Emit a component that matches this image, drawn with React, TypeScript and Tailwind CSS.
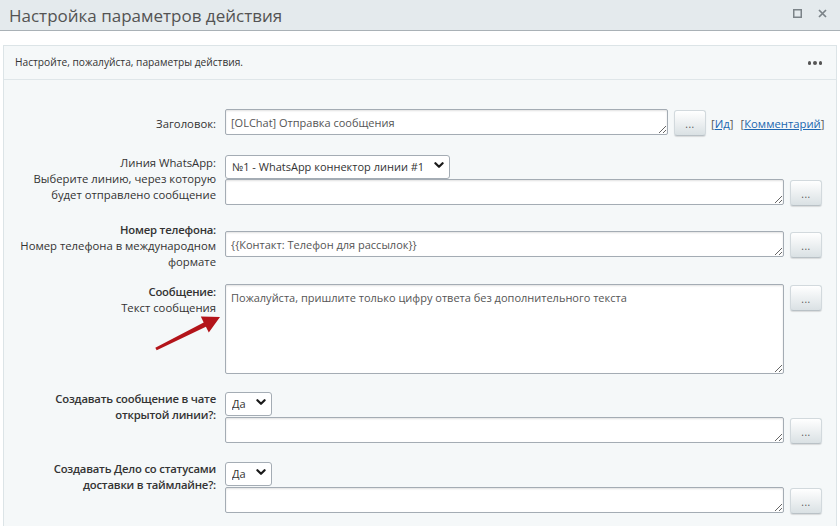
import React from "react";

const Btn = () => (
  <button
    type="button"
    className="mt-[1px] ml-[6px] flex h-[26px] w-[32px] shrink-0 items-center justify-center rounded-[3px] border border-[#d2d9dd] border-b-[#b9c1c6] bg-linear-to-b from-[#ffffff] to-[#dae1e4] pt-[2px] text-[10px] leading-none tracking-[0.5px] text-[#555] shadow-[0_1px_1px_rgba(0,0,0,0.12)]"
  >
    ...
  </button>
);

const TA = ({ w, h = 26, value = "" }: { w: string; h?: number; value?: string }) => (
  <textarea
    defaultValue={value}
    style={{ height: h }}
    className={`${w} block shrink-0 rounded-[2px] border border-[#a4acb4] bg-white px-[5px] py-[5px] text-[11px] leading-[15px] text-[#555] shadow-[inset_0_1px_2px_rgba(0,0,0,0.12)] outline-none`}
  />
);

const Sel = ({ w, value }: { w: string; value: string }) => (
  <div className={`relative ${w} h-[24px]`}>
    <select
      defaultValue={value}
      className="h-[24px] w-full appearance-none rounded-[3px] border border-[#a4acb4] bg-white pl-[6px] pr-[18px] text-[11px] text-[#333] outline-none"
    >
      <option>{value}</option>
    </select>
    <svg
      className="pointer-events-none absolute right-[6px] top-[9px]"
      width="10"
      height="7"
      viewBox="0 0 10 7"
    >
      <path d="M1.4 1.2 L5 4.8 L8.6 1.2" fill="none" stroke="#1a1a1a" strokeWidth="2.2" strokeLinecap="round" strokeLinejoin="round" />
    </svg>
  </div>
);

const Label = ({ children, pt = 0 }: { children: React.ReactNode; pt?: number }) => (
  <div
    style={{ paddingTop: pt }}
    className="w-[212px] shrink-0 whitespace-nowrap text-right text-[11.3px] leading-[16px] text-[#333]"
  >
    {children}
  </div>
);

export default function App() {
  return (
    <div
      className="relative h-[526px] w-[840px] overflow-hidden bg-white"
      style={{ fontFamily: '"Open Sans", "Noto Sans", sans-serif' }}
    >
      {/* Title bar */}
      <div className="flex h-[31px] items-center justify-between border-b border-[#a9b1b6] bg-[#e4eaed] pl-[9px] pr-[13px]">
        <div className="text-[17px] leading-none text-[#535353]">Настройка параметров действия</div>
        <div className="flex items-center gap-[16px] pb-[4px]">
          <svg width="9" height="9" viewBox="0 0 9 9">
            <rect x="0.75" y="0.75" width="7.5" height="7.5" fill="none" stroke="#7b8388" strokeWidth="1.5" />
          </svg>
          <svg width="9" height="9" viewBox="0 0 9 9">
            <path d="M1 1 L8 8 M8 1 L1 8" stroke="#7b8388" strokeWidth="1.7" />
          </svg>
        </div>
      </div>

      {/* Panel */}
      <div className="mx-[3px] mt-[14px] h-[600px] border border-[#dce4e7] bg-[#f5f8f9]">
        <div className="flex h-[34px] items-center justify-between border-b border-[#dfe6e9] pl-[11px] pr-[14px]">
          <div className="text-[10.2px] text-[#333]">Настройте, пожалуйста, параметры действия.</div>
          <div className="flex gap-[2px] pt-[1px]">
            <span className="h-[3.5px] w-[3.5px] rounded-full bg-[#555]" />
            <span className="h-[3.5px] w-[3.5px] rounded-full bg-[#555]" />
            <span className="h-[3.5px] w-[3.5px] rounded-full bg-[#555]" />
          </div>
        </div>

        <div className="pt-[29px]">
          {/* Row 1 */}
          <div className="flex items-start gap-[9px]">
            <Label pt={7}>Заголовок:</Label>
            <div className="flex items-start">
              <TA w="w-[443px]" value="[OLChat] Отправка сообщения" />
              <Btn />
              <div className="ml-[5px] pt-[7px] text-[11.3px] leading-[16px] text-[#555]">
                [<a className="text-[#2067b0] underline">Ид</a>]
                <span className="ml-[7px]">
                  [<a className="text-[#2067b0] underline">Комментарий</a>]
                </span>
              </div>
            </div>
          </div>

          {/* Row 2 */}
          <div className="mt-[17px] flex items-start gap-[9px]">
            <Label pt={2}>
              Линия WhatsApp:
              <br />
              Выберите линию, через которую
              <br />
              будет отправлено сообщение
            </Label>
            <div>
              <Sel w="w-[225px]" value="№1 - WhatsApp коннектор линии #1" />
              <div className="mt-[2px] flex items-start">
                <TA w="w-[559px]" />
                <Btn />
              </div>
            </div>
          </div>

          {/* Row 3 */}
          <div className="mt-[16px] flex items-start gap-[9px]">
            <Label>
              <span className="font-semibold tracking-[-0.2px]">Номер телефона:</span>
              <br />
              Номер телефона в международном
              <br />
              формате
            </Label>
            <div className="mt-[9px] flex items-start">
              <TA w="w-[559px]" value="{{Контакт: Телефон для рассылок}}" />
              <Btn />
            </div>
          </div>

          {/* Row 4 */}
          <div className="mt-[14px] flex items-start gap-[9px]">
            <Label>
              <span className="font-semibold tracking-[-0.2px]">Сообщение:</span>
              <br />
              Текст сообщения
            </Label>
            <div className="flex items-start">
              <TA
                w="w-[559px]"
                h={90}
                value="Пожалуйста, пришлите только цифру ответа без дополнительного текста"
              />
              <Btn />
            </div>
          </div>

          {/* Row 5 */}
          <div className="mt-[16px] flex items-start gap-[9px]">
            <Label pt={1}>
              <span className="font-semibold tracking-[-0.2px]">
                Создавать сообщение в чате
                <br />
                открытой линии?:
              </span>
            </Label>
            <div>
              <Sel w="w-[47px]" value="Да" />
              <div className="mt-[3px] flex items-start">
                <TA w="w-[559px]" />
                <Btn />
              </div>
            </div>
          </div>

          {/* Row 6 */}
          <div className="mt-[16px] flex items-start gap-[9px]">
            <Label pt={1}>
              <span className="font-semibold tracking-[-0.2px]">
                Создавать Дело со статусами
                <br />
                доставки в таймлайне?:
              </span>
            </Label>
            <div>
              <Sel w="w-[47px]" value="Да" />
              <div className="mt-[3px] flex items-start">
                <TA w="w-[559px]" />
                <Btn />
              </div>
            </div>
          </div>
        </div>
      </div>

      {/* Red annotation arrow */}
      <svg className="pointer-events-none absolute left-0 top-0" width="840" height="526">
        <polygon
          points="155.3,347.7 203.7,322.4 200.8,316.6 220,317 208.8,332.6 205.9,326.8 156.7,350.3"
          fill="#b3141a"
        />
      </svg>
    </div>
  );
}
